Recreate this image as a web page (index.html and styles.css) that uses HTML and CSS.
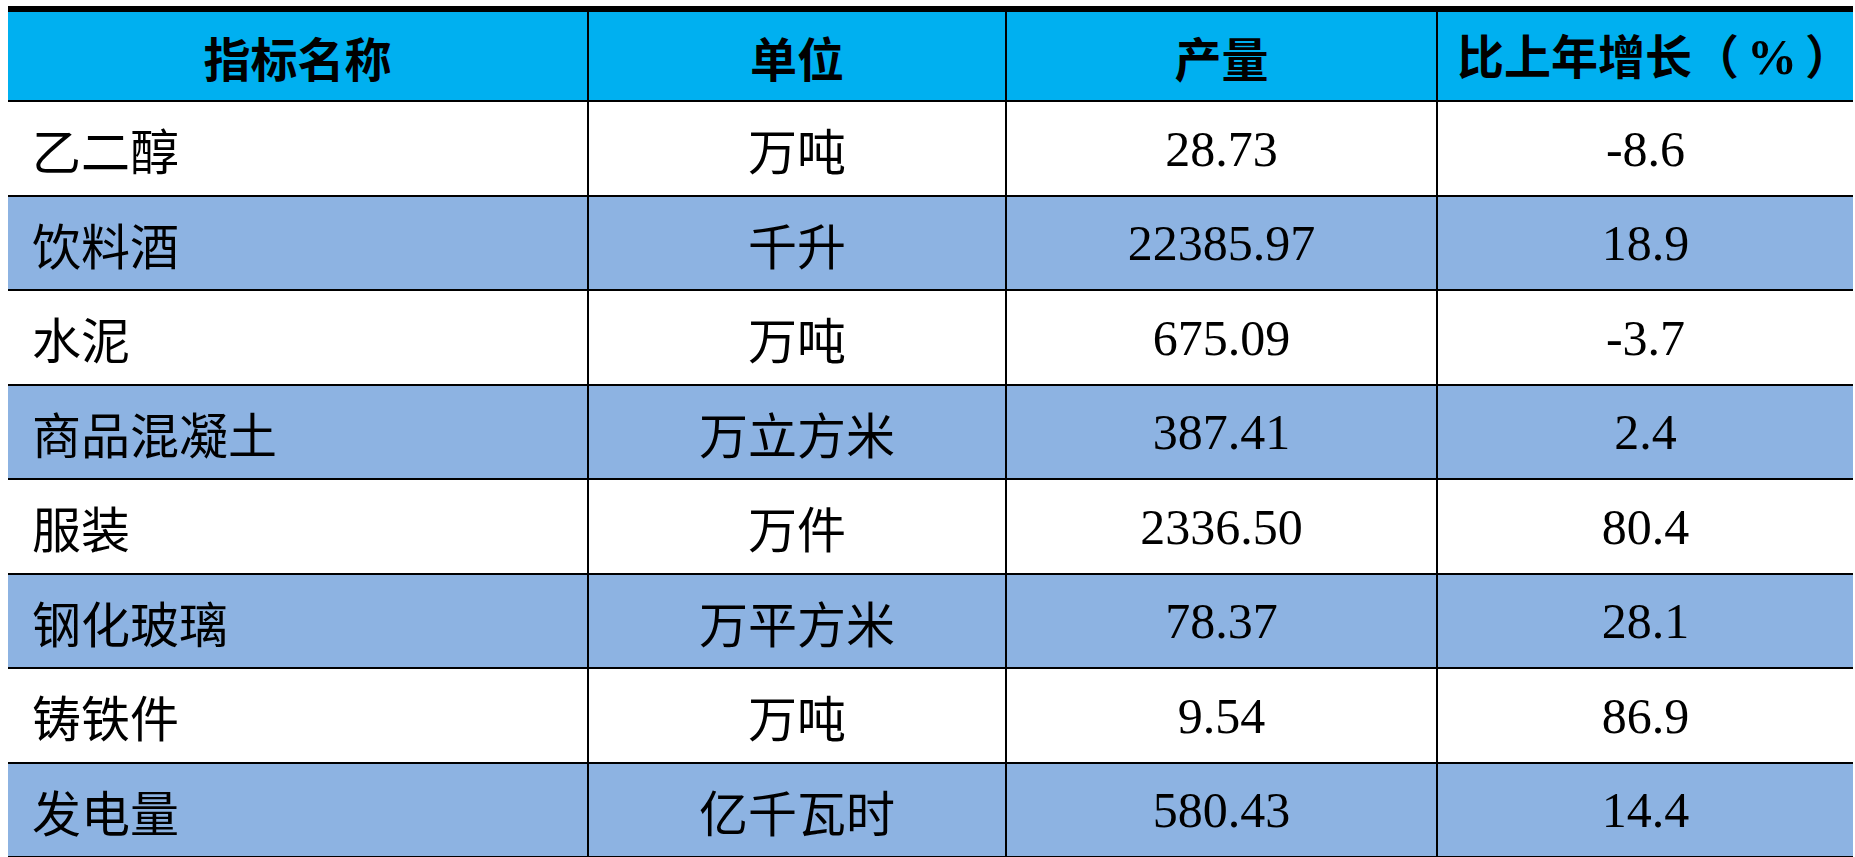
FILE: index.html
```html
<!DOCTYPE html>
<html lang="zh-CN">
<head>
<meta charset="utf-8">
<title>主要工业产品产量</title>
<link rel="stylesheet" href="styles.css">
</head>
<body>
<table class="stats">
  <colgroup>
    <col class="c1"><col class="c2"><col class="c3"><col class="c4">
  </colgroup>
  <thead>
    <tr class="head">
      <th>指标名称</th><th>单位</th><th>产量</th><th class="growth">比上年增长（<span class="pct">%</span>）</th>
    </tr>
  </thead>
  <tbody>
    <tr class="odd"><td class="name">乙二醇</td><td>万吨</td><td class="num">28.73</td><td class="num">-8.6</td></tr>
    <tr class="even"><td class="name">饮料酒</td><td>千升</td><td class="num">22385.97</td><td class="num">18.9</td></tr>
    <tr class="odd"><td class="name">水泥</td><td>万吨</td><td class="num">675.09</td><td class="num">-3.7</td></tr>
    <tr class="even"><td class="name">商品混凝土</td><td>万立方米</td><td class="num">387.41</td><td class="num">2.4</td></tr>
    <tr class="odd"><td class="name">服装</td><td>万件</td><td class="num">2336.50</td><td class="num">80.4</td></tr>
    <tr class="even"><td class="name">钢化玻璃</td><td>万平方米</td><td class="num">78.37</td><td class="num">28.1</td></tr>
    <tr class="odd"><td class="name">铸铁件</td><td>万吨</td><td class="num">9.54</td><td class="num">86.9</td></tr>
    <tr class="even"><td class="name">发电量</td><td>亿千瓦时</td><td class="num">580.43</td><td class="num">14.4</td></tr>
  </tbody>
</table>
</body>
</html>
```
FILE: styles.css
```css
html, body {
  background: #ffffff;
}
body {
  margin: 6px 0 0 8px;
  overflow: hidden;
  font-family: "Liberation Serif", "Noto Sans CJK SC", serif;
  color: #000;
}
.stats {
  border-collapse: separate;
  border-spacing: 0;
  table-layout: fixed;
  width: 1845px;
  border-top: 6px solid #000;
}
.c1 { width: 579px; }
.c2 { width: 418px; }
.c3 { width: 431px; }
.c4 { width: 417px; }

.stats th,
.stats td {
  padding: 0;
  border-bottom: 2px solid #000;
  text-align: center;
  vertical-align: middle;
  white-space: nowrap;
  box-sizing: border-box;
}
.stats th + th,
.stats td + td {
  border-left: 2px solid #000;
}
.head th {
  background: #00b0f0;
  height: 90px;
  font-family: "Noto Sans CJK SC", sans-serif;
  font-weight: 700;
  font-size: 47px;
  line-height: 1;
}
.head th.growth {
  padding-left: 18px;
}
.head .pct {
  font-family: "Liberation Serif", serif;
  font-weight: 700;
  font-size: 50px;
  margin: 0 8px;
}
.stats td {
  font-family: "Noto Sans CJK SC", sans-serif;
  font-size: 49px;
  line-height: 1;
  font-weight: 400;
}
.stats td.num {
  font-family: "Liberation Serif", serif;
  font-size: 50px;
}
.stats td.name {
  text-align: left;
  padding-left: 24px;
}
.odd td { background: #ffffff; height: 95px; }
.even td { background: #8db3e2; height: 94px; }
```
